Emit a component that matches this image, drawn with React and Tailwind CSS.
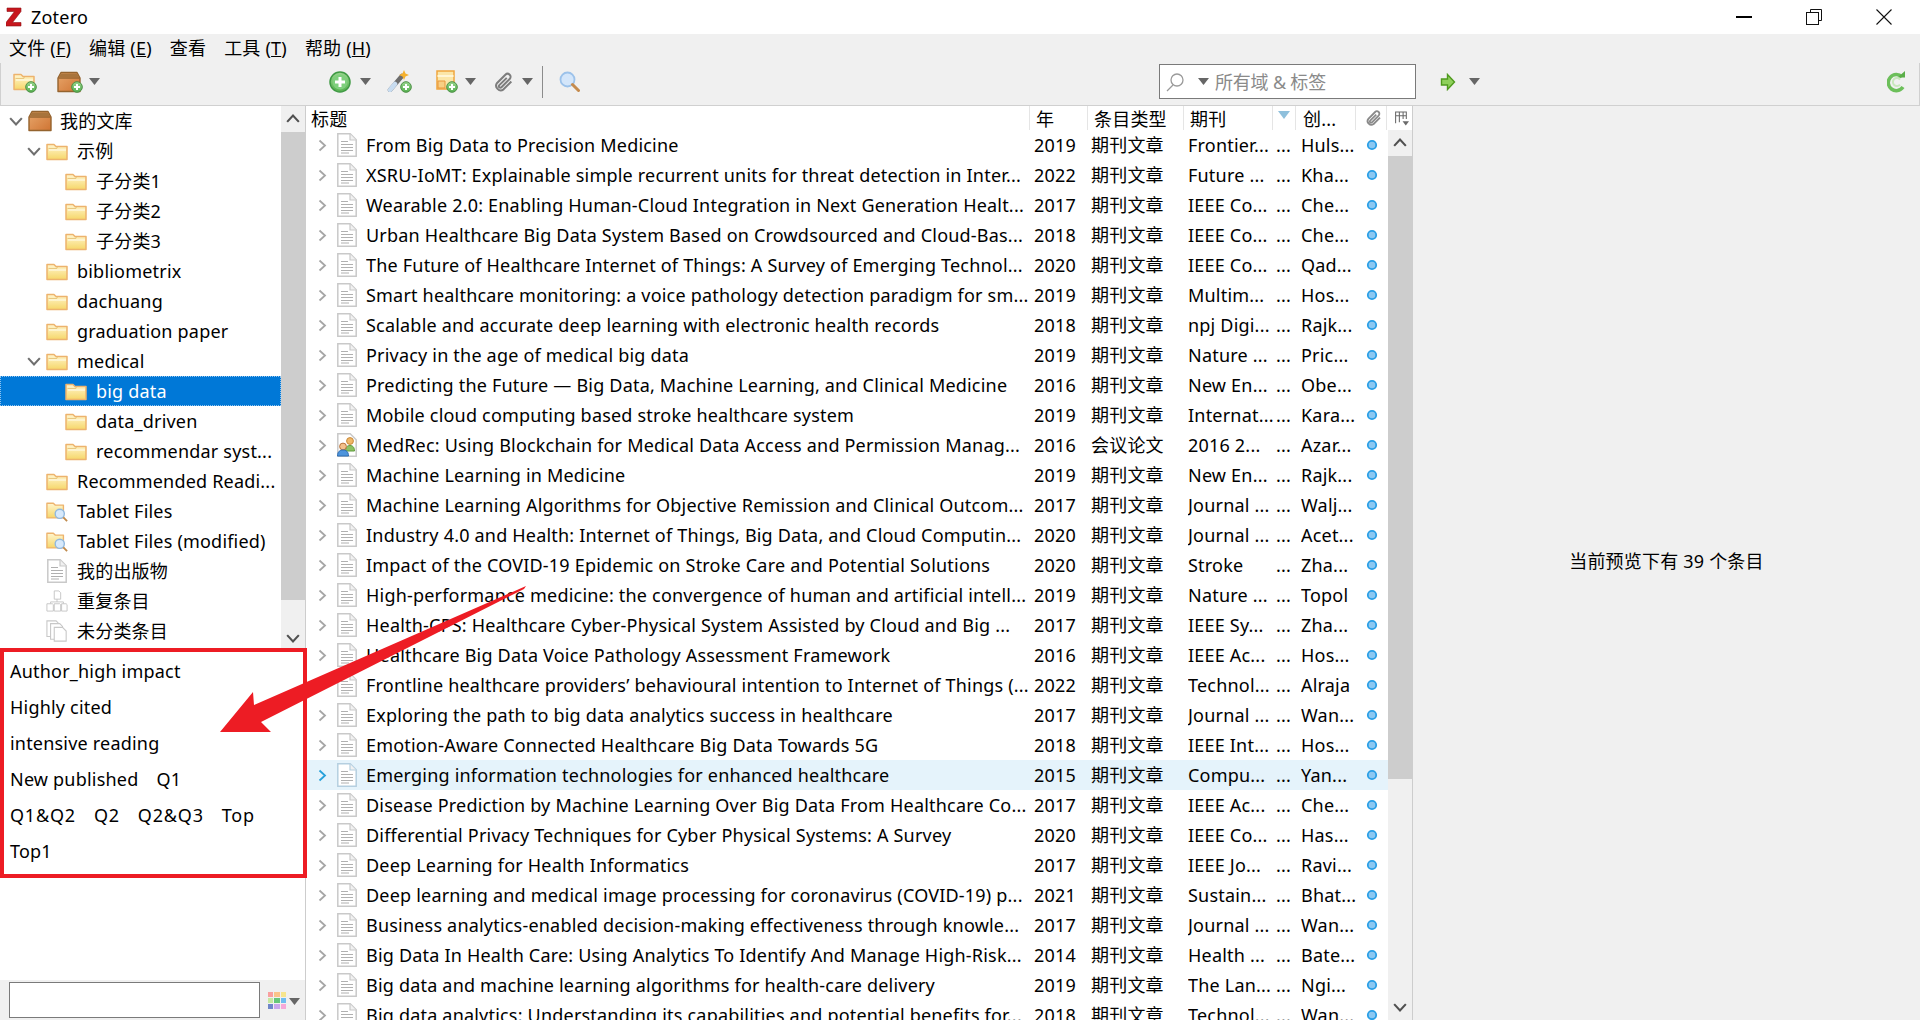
const items = [
  ["From Big Data to Precision Medicine", "2019", "期刊文章", "Frontier...", "Huls..."],
  ["XSRU-IoMT: Explainable simple recurrent units for threat detection in Inter...", "2022", "期刊文章", "Future ...", "Kha..."],
  ["Wearable 2.0: Enabling Human-Cloud Integration in Next Generation Healt...", "2017", "期刊文章", "IEEE Co...", "Che..."],
  ["Urban Healthcare Big Data System Based on Crowdsourced and Cloud-Bas...", "2018", "期刊文章", "IEEE Co...", "Che..."],
  ["The Future of Healthcare Internet of Things: A Survey of Emerging Technol...", "2020", "期刊文章", "IEEE Co...", "Qad..."],
  ["Smart healthcare monitoring: a voice pathology detection paradigm for sm...", "2019", "期刊文章", "Multim...", "Hos..."],
  ["Scalable and accurate deep learning with electronic health records", "2018", "期刊文章", "npj Digi...", "Rajk..."],
  ["Privacy in the age of medical big data", "2019", "期刊文章", "Nature ...", "Pric..."],
  ["Predicting the Future — Big Data, Machine Learning, and Clinical Medicine", "2016", "期刊文章", "New En...", "Obe..."],
  ["Mobile cloud computing based stroke healthcare system", "2019", "期刊文章", "Internat...", "Kara..."],
  ["MedRec: Using Blockchain for Medical Data Access and Permission Manag...", "2016", "会议论文", "2016 2...", "Azar..."],
  ["Machine Learning in Medicine", "2019", "期刊文章", "New En...", "Rajk..."],
  ["Machine Learning Algorithms for Objective Remission and Clinical Outcom...", "2017", "期刊文章", "Journal ...", "Walj..."],
  ["Industry 4.0 and Health: Internet of Things, Big Data, and Cloud Computin...", "2020", "期刊文章", "Journal ...", "Acet..."],
  ["Impact of the COVID-19 Epidemic on Stroke Care and Potential Solutions", "2020", "期刊文章", "Stroke", "Zha..."],
  ["High-performance medicine: the convergence of human and artificial intell...", "2019", "期刊文章", "Nature ...", "Topol"],
  ["Health-CPS: Healthcare Cyber-Physical System Assisted by Cloud and Big ...", "2017", "期刊文章", "IEEE Sy...", "Zha..."],
  ["Healthcare Big Data Voice Pathology Assessment Framework", "2016", "期刊文章", "IEEE Ac...", "Hos..."],
  ["Frontline healthcare providers’ behavioural intention to Internet of Things (...", "2022", "期刊文章", "Technol...", "Alraja"],
  ["Exploring the path to big data analytics success in healthcare", "2017", "期刊文章", "Journal ...", "Wan..."],
  ["Emotion-Aware Connected Healthcare Big Data Towards 5G", "2018", "期刊文章", "IEEE Int...", "Hos..."],
  ["Emerging information technologies for enhanced healthcare", "2015", "期刊文章", "Compu...", "Yan..."],
  ["Disease Prediction by Machine Learning Over Big Data From Healthcare Co...", "2017", "期刊文章", "IEEE Ac...", "Che..."],
  ["Differential Privacy Techniques for Cyber Physical Systems: A Survey", "2020", "期刊文章", "IEEE Co...", "Has..."],
  ["Deep Learning for Health Informatics", "2017", "期刊文章", "IEEE Jo...", "Ravi..."],
  ["Deep learning and medical image processing for coronavirus (COVID-19) p...", "2021", "期刊文章", "Sustain...", "Bhat..."],
  ["Business analytics-enabled decision-making effectiveness through knowle...", "2017", "期刊文章", "Journal ...", "Wan..."],
  ["Big Data In Health Care: Using Analytics To Identify And Manage High-Risk...", "2014", "期刊文章", "Health ...", "Bate..."],
  ["Big data and machine learning algorithms for health-care delivery", "2019", "期刊文章", "The Lan...", "Ngi..."],
  ["Big data analytics: Understanding its capabilities and potential benefits for...", "2018", "期刊文章", "Technol...", "Wan..."],
];

const tree = [
  { label: "我的文库", level: 0, icon: "library", open: true },
  { label: "示例", level: 1, icon: "folder", open: true },
  { label: "子分类1", level: 2, icon: "folder" },
  { label: "子分类2", level: 2, icon: "folder" },
  { label: "子分类3", level: 2, icon: "folder" },
  { label: "bibliometrix", level: 1, icon: "folder" },
  { label: "dachuang", level: 1, icon: "folder" },
  { label: "graduation paper", level: 1, icon: "folder" },
  { label: "medical", level: 1, icon: "folder", open: true },
  { label: "big data", level: 2, icon: "folder", selected: true },
  { label: "data_driven", level: 2, icon: "folder" },
  { label: "recommendar syst...", level: 2, icon: "folder" },
  { label: "Recommended Readi...", level: 1, icon: "folder" },
  { label: "Tablet Files", level: 1, icon: "search" },
  { label: "Tablet Files (modified)", level: 1, icon: "search" },
  { label: "我的出版物", level: 1, icon: "doc" },
  { label: "重复条目", level: 1, icon: "dupes" },
  { label: "未分类条目", level: 1, icon: "unfiled" },
];

const tagRows = [
  ["Author_high impact"],
  ["Highly cited"],
  ["intensive reading"],
  ["New published", "Q1"],
  ["Q1&Q2", "Q2", "Q2&Q3", "Top"],
  ["Top1"],
];

const swatches = ["#f9a0a0", "#fbc48a", "#f6e58d", "#c5e8a0", "#66c77a", "#6fbdf0", "#6f86c9", "#c9a6ec", "#f5a8d8"];

const Defs = () => (
  <svg className="absolute w-0 h-0">
    <defs>
      <linearGradient id="folderFill" x1="0" y1="0" x2="0" y2="1">
        <stop offset="0" stopColor="#fff6d0" />
        <stop offset="1" stopColor="#f6d76a" />
      </linearGradient>
      <linearGradient id="boxFill" x1="0" y1="0" x2="1" y2="1">
        <stop offset="0" stopColor="#e8a76c" />
        <stop offset="1" stopColor="#cf7433" />
      </linearGradient>
      <linearGradient id="greenFill" x1="0" y1="0" x2="0" y2="1">
        <stop offset="0" stopColor="#9ad68f" />
        <stop offset="1" stopColor="#55b04f" />
      </linearGradient>
    </defs>
  </svg>
);

const Chevron = ({ dir = "right", color = "#a0a0a0", size = 12 }) => {
  const d = {
    right: "M3.500 1 9 6l-5.500 5",
    down: "M1 3.500 6 9l5-5.500",
    up: "M1 8.500 6 3l5 5.500",
  }[dir];
  return (
    <svg width={size} height={size} viewBox="0 0 12 12" fill="none" stroke={color} strokeWidth="1.800">
      <path d={d} />
    </svg>
  );
};

const Caret = ({ className = "" }) => (
  <svg width="11" height="7" viewBox="0 0 11 7" className={className}>
    <path d="M0 0h11L5.500 7z" fill="#666" />
  </svg>
);

const Folder = () => (
  <svg width="22" height="20" viewBox="0 0 22 20">
    <path d="M1 3.500h7l2 2h11v13H1z" fill="url(#folderFill)" stroke="#edb36d" strokeWidth="1.500" strokeLinejoin="round" />
    <path d="M2.500 7.500h8l1-1.500" fill="none" stroke="#e9c77f" strokeWidth="1.200" />
    <path d="M3 9h17" stroke="#fffbe6" strokeWidth="1.200" />
  </svg>
);

const Library = () => (
  <svg width="24" height="22" viewBox="0 0 24 22">
    <path d="M1 7 4 1.500h16L23 7v13.500H1z" fill="url(#boxFill)" stroke="#94632e" strokeWidth="1.400" strokeLinejoin="round" />
    <path d="M1.500 7h21" stroke="#94632e" strokeWidth="1.400" />
    <path d="M4 2.500h16L22 6H2z" fill="#a8743c" />
  </svg>
);

const Doc = ({ tint = "#c9c9c9" }) => (
  <svg width="20" height="24" viewBox="0 0 20 24">
    <path d="M.8.8h12.400l6 6v16.400H.8z" fill="#fff" stroke={tint} strokeWidth="1.500" />
    <path d="M13 1v6h6" fill="#f1f1f1" stroke={tint} strokeWidth="1.200" />
    <path d="M4 8.500h7M4 11.500h12M4 14.500h12M4 17.500h12M4 20h8" stroke="#b0b0b0" strokeWidth="1" />
  </svg>
);

const ConferenceDoc = () => (
  <svg width="20" height="24" viewBox="0 0 20 24">
    <path d="M.8.8h12.400l6 6v16.400H.8z" fill="#fff" stroke="#c9c9c9" strokeWidth="1.500" />
    <circle cx="13" cy="8" r="3.400" fill="#f0b868" stroke="#c98a3c" />
    <path d="M8.500 18c0-4 2-5.500 4.500-5.500s4.500 1.500 4.500 5.500z" fill="#8cc263" stroke="#5f9a3c" />
    <circle cx="6" cy="13.500" r="3.400" fill="#f3c08b" stroke="#b8733a" />
    <path d="M.5 23c0-4.500 2.500-6 5.500-6s5.500 1.500 5.500 6z" fill="#4d94dc" stroke="#2f6eb3" />
  </svg>
);

const SavedSearch = () => (
  <svg width="24" height="25" viewBox="0 0 24 25">
    <path d="M1 3.500h7l2 2h9v14H1z" fill="url(#folderFill)" stroke="#edb36d" strokeWidth="1.500" strokeLinejoin="round" />
    <circle cx="15" cy="15" r="5" fill="#d7e9fb" stroke="#8fb8e0" strokeWidth="1.500" />
    <path d="m19 19 4 4" stroke="#c08a4c" strokeWidth="2" />
  </svg>
);

const Dupes = () => (
  <svg width="24" height="24" viewBox="0 0 24 24" fill="#fff" stroke="#c4c4c4" strokeWidth="1">
    <path d="M9 1h5l2 2v7H9z" />
    <path d="M12 10v3M5 15v-2h14v2" fill="none" />
    <path d="M1 15h6l1 1v7H1zM9 15h6l1 1v7H9zM17 15h5l1 1v7h-6z" />
  </svg>
);

const Unfiled = () => (
  <svg width="24" height="24" viewBox="0 0 24 24" fill="#fff" stroke="#c8c8c8" strokeWidth="1.200">
    <path d="M1 1h10l3 3v14H1z" />
    <path d="M5 4h10l3 3v14H5z" />
    <path d="M9 8h9l4 4v11H9z" />
  </svg>
);

const PlusBadge = ({ className = "" }) => (
  <svg width="12" height="12" viewBox="0 0 12 12" className={"absolute " + className}>
    <circle cx="6" cy="6" r="5.300" fill="url(#greenFill)" stroke="#4d8f46" />
    <path d="M6 3v6M3 6h6" stroke="#fff" strokeWidth="2" />
  </svg>
);

const treeIcons = {
  folder: <Folder />,
  library: <Library />,
  search: <SavedSearch />,
  doc: <Doc />,
  dupes: <Dupes />,
  unfiled: <Unfiled />,
};

const TreeRow = ({ row }) => {
  const pad = { 0: "pl-[9px]", 1: "pl-[27px]", 2: "pl-[46px]" }[row.level];
  const iconBox = row.level === 0 ? "w-[24px]" : "w-[22px]";
  return (
    <div
      className={
        "flex items-center h-[30px] whitespace-nowrap " +
        pad +
        (row.selected ? " bg-[#0078d7] text-white outline-1 outline-dotted outline-[#8fc3ef] -outline-offset-1" : "")
      }
    >
      <span className="flex items-center justify-center w-[14px] h-[14px]">
        {row.open && <Chevron dir="down" color="#6f6f6f" size={14} />}
      </span>
      <span className={"flex items-center justify-center ml-[5px] " + iconBox}>{treeIcons[row.icon]}</span>
      <span className={row.level === 0 ? "ml-[8px]" : "ml-[9px]"}>{row.label}</span>
    </div>
  );
};

const Scrollbar = ({ children }) => (
  <div className="flex flex-col w-[24px] shrink-0 bg-[#f0f0f0]">{children}</div>
);

const LeftPane = () => (
  <div className="flex flex-col w-[306px] shrink-0 border-r border-[#cdcdcd]">
    <div className="flex h-[542px]">
      <div className="w-[281px] shrink-0 overflow-hidden">
        {tree.map((row) => (
          <TreeRow key={row.label} row={row} />
        ))}
      </div>
      <Scrollbar>
        <div className="flex items-center justify-center h-[26px]">
          <Chevron dir="up" color="#505050" size={14} />
        </div>
        <div className="h-[468px] bg-[#cdcdcd]" />
        <div className="flex-1 flex items-end justify-center pb-[3px]">
          <Chevron dir="down" color="#505050" size={14} />
        </div>
      </Scrollbar>
    </div>
    <div className="h-[230px] w-[307px] border-4 border-[#ed1c24] pl-[6px] pt-px relative z-10">
      {tagRows.map((row, i) => (
        <div key={i} className={"flex items-center gap-[18px] h-[36px] " + (i === 4 ? "tracking-[0.8px]" : "")}>
          {row.map((t) => (
            <span key={t}>{t}</span>
          ))}
        </div>
      ))}
    </div>
    <div className="flex-1" />
    <div className="flex items-center h-[40px] bg-[#f0f0f0] pl-[9px]">
      <div className="w-[251px] h-[36px] bg-white border border-[#7a7a7a]" />
      <div className="grid grid-cols-3 gap-[1px] w-[18px] ml-[8px]">
        {swatches.map((c) => (
          <span key={c} className="h-[5px]" style={{ backgroundColor: c }} />
        ))}
      </div>
      <Caret className="ml-[3px] mt-[3px]" />
    </div>
  </div>
);

const HeaderCell = ({ className, children }) => (
  <div className={"flex items-center shrink-0 h-full border-r border-[#e5e5e5] overflow-hidden whitespace-nowrap " + className}>
    {children}
  </div>
);

const ItemRow = ({ item, index }) => {
  const selected = index === 21;
  const attached = index === 10;
  return (
    <div className={"flex items-center h-[30px] whitespace-nowrap " + (selected ? "bg-[#e5f3fb]" : "")}>
      <span className="flex justify-center w-[12px] ml-[10px]">
        <Chevron color={selected ? "#26a0da" : "#a6a6a6"} size={15} />
      </span>
      <span className="flex w-[20px] ml-[9px]">{attached ? <ConferenceDoc /> : <Doc tint={selected ? "#b5cfe0" : "#c9c9c9"} />}</span>
      <span className="w-[668px] ml-[9px] overflow-hidden">{item[0]}</span>
      <span className="w-[57px]">{item[1]}</span>
      <span className="w-[97px]">{item[2]}</span>
      <span className="w-[88px] overflow-hidden">{item[3]}</span>
      <span className="w-[25px]">...</span>
      <span className="w-[64px] overflow-hidden">{item[4]}</span>
      <svg width="12" height="12" viewBox="0 0 12 12" className="ml-[1px]">
        <circle cx="6" cy="6" r="4.200" fill="#8cc8f2" stroke="#2a9fe6" strokeWidth="1.800" />
      </svg>
    </div>
  );
};

const MiddlePane = () => (
  <div className="flex flex-col w-[1106px] shrink-0 overflow-hidden">
    <div className="flex items-center h-[24px] shrink-0">
      <HeaderCell className="w-[724px] pl-[5px] pt-[2px]">标题</HeaderCell>
      <HeaderCell className="w-[58px] pl-[6px] pt-[2px]">年</HeaderCell>
      <HeaderCell className="w-[96px] pl-[6px] pt-[2px]">条目类型</HeaderCell>
      <HeaderCell className="w-[89px] pl-[6px] pt-[2px]">期刊</HeaderCell>
      <HeaderCell className="w-[23px] justify-center">
        <svg width="12" height="8" viewBox="0 0 12 8" className="mb-[6px]">
          <path d="M0 0h12L6 8z" fill="#8fc0dc" />
        </svg>
      </HeaderCell>
      <HeaderCell className="w-[60px] pl-[7px] pt-[2px]">创...</HeaderCell>
      <HeaderCell className="w-[31px] justify-center pl-[6px]">
        <svg width="18" height="22" viewBox="0 0 24 24" fill="none" stroke="#8a8a8a" strokeWidth="2.400">
          <path d="M20 11.500 11.500 20a5 5 0 0 1-7-7l9-9a3.300 3.300 0 0 1 4.700 4.700l-9 9a1.600 1.600 0 0 1-2.300-2.300L15 7.500" />
        </svg>
      </HeaderCell>
      <div className="flex justify-center w-[25px] shrink-0 pl-[3px]">
        <svg width="15" height="17" viewBox="0 0 14 15" fill="none" stroke="#6a6a6a">
          <path d="M1.500 12V1.500h10V8M1.500 5h10M5 1.500V11M8.500 1.500V8" />
          <path d="M8 10h6l-3 4z" fill="#6a6a6a" stroke="none" />
        </svg>
      </div>
    </div>
    <div className="flex flex-1 min-h-0">
      <div className="w-[1082px] shrink-0 overflow-hidden">
        {items.map((item, i) => (
          <ItemRow key={item[0]} item={item} index={i} />
        ))}
      </div>
      <Scrollbar>
        <div className="flex items-center justify-center h-[26px]">
          <Chevron dir="up" color="#505050" size={14} />
        </div>
        <div className="h-[623px] bg-[#cdcdcd]" />
        <div className="flex-1 flex items-end justify-center pb-[6px]">
          <Chevron dir="down" color="#505050" size={14} />
        </div>
      </Scrollbar>
    </div>
  </div>
);

const Toolbar = () => (
  <div className="flex items-center h-[43px] pb-[5px] shrink-0 bg-[#f0f0f0] border-b border-l border-r border-[#d0d0d0]">
    <span className="relative w-[24px] h-[22px] ml-[12px]">
      <Folder />
      <PlusBadge className="right-0 bottom-0" />
    </span>
    <span className="relative w-[26px] h-[22px] ml-[20px]">
      <Library />
      <PlusBadge className="right-0 bottom-0" />
    </span>
    <Caret className="ml-[6px]" />
    <svg width="22" height="22" viewBox="0 0 22 22" className="ml-[229px]">
      <circle cx="11" cy="11" r="10" fill="url(#greenFill)" stroke="#3f9a44" strokeWidth="1.500" />
      <circle cx="11" cy="11" r="7.500" fill="#7fcf7d" />
      <path d="M11 6v10M6 11h10" stroke="#fff" strokeWidth="3" />
    </svg>
    <Caret className="ml-[9px]" />
    <span className="relative w-[25px] h-[23px] ml-[16px]">
      <svg width="22" height="22" viewBox="0 0 22 22">
        <path d="M3 20 15 6" stroke="#6d6d6d" strokeWidth="4.500" strokeLinecap="round" />
        <path d="M3 20 8 14" stroke="#c8dcf0" strokeWidth="4.500" strokeLinecap="round" />
        <path d="m17 0 1.500 3.500L22 5l-3.500 1.500L17 10l-1.500-3.500L12 5l3.500-1.500z" fill="#f5b12e" />
      </svg>
      <PlusBadge className="right-0 bottom-0" />
    </span>
    <span className="relative w-[22px] h-[23px] ml-[24px]">
      <svg width="19" height="20" viewBox="0 0 19 20">
        <rect x="1" y="1" width="17" height="18" fill="#fbe6a8" stroke="#f0a53c" strokeWidth="1.500" />
        <path d="M1.500 6h16" stroke="#fff6d6" strokeWidth="2" />
        <path d="M2 11h7v7H2z" fill="#f8cf83" stroke="#e8963c" />
      </svg>
      <PlusBadge className="right-0 bottom-0" />
    </span>
    <Caret className="ml-[7px]" />
    <svg width="22" height="26" viewBox="0 0 24 24" fill="none" stroke="#7d7d7d" strokeWidth="2.200" className="ml-[17px]">
      <path d="M20 11.500 11.500 20a5 5 0 0 1-7-7l9-9a3.300 3.300 0 0 1 4.700 4.700l-9 9a1.600 1.600 0 0 1-2.300-2.300L15 7.500" />
    </svg>
    <Caret className="ml-[7px]" />
    <span className="w-px h-[32px] bg-[#8c8c8c] ml-[9px]" />
    <svg width="21" height="21" viewBox="0 0 21 21" className="ml-[16px]">
      <circle cx="8.500" cy="8.500" r="7" fill="#d4e6fa" stroke="#9cc2ea" strokeWidth="1.800" />
      <path d="m13.500 13.500 6 6" stroke="#c58b4e" strokeWidth="3" strokeLinecap="round" />
    </svg>
    <div className="flex items-center w-[257px] h-[35px] ml-[579px] bg-white border border-[#7a7a7a] text-[#8a8a8a]">
      <svg width="20" height="20" viewBox="0 0 20 20" fill="none" stroke="#9a9a9a" strokeWidth="1.300" className="ml-[5px]">
        <circle cx="12" cy="8" r="6" />
        <path d="m8 13-6 6" />
      </svg>
      <Caret className="ml-[13px]" />
      <span className="ml-[6px] whitespace-nowrap tracking-[-0.2px]">所有域 &amp; 标签</span>
    </div>
    <svg width="16" height="18" viewBox="0 0 16 18" className="ml-[24px]">
      <path d="M1.500 6h6V1.500L14.500 9l-7 7.500V12h-6z" fill="#8fd05c" stroke="#4f9a1e" strokeWidth="1.400" />
    </svg>
    <Caret className="ml-[13px]" />
    <svg width="20" height="24" viewBox="0 0 20 24" fill="none" className="ml-[407px]">
      <path d="M15 7A8 8 0 1 0 16 17" stroke="#6cbf5a" strokeWidth="3.500" />
      <path d="M10.500 7.500H18V1z" fill="#5aae48" />
      <path d="M13 9.500A4 4 0 1 0 13 14.500" stroke="#c9e8bd" strokeWidth="2" />
    </svg>
  </div>
);

const Arrow = () => (
  <svg width="1920" height="1020" viewBox="0 0 1920 1020" className="absolute left-0 top-0 z-20 pointer-events-none">
    <path d="M526 586 254 705l-1-13-33 40h51l-10-10 263-133z" fill="#ed1c24" />
  </svg>
);

export default function App() {
  return (
    <div className="relative flex flex-col h-[1020px] w-[1920px] overflow-hidden bg-white text-black text-[18px] leading-[24px] tracking-[0.2px] font-['Noto_Sans','Noto_Sans_CJK_SC',sans-serif]">
      <Defs />
      <div className="flex items-center h-[34px] shrink-0 pl-[6px]">
        <svg width="16" height="20" viewBox="0 0 16 20">
          <path d="M1 1h14v3.500L6.500 15.500H15V19H0v-3.500L8.500 4.500H1z" fill="#c8161d" stroke="#8e1015" strokeWidth=".6" />
        </svg>
        <span className="ml-[9px]">Zotero</span>
        <div className="flex items-center ml-auto">
          <span className="w-[16px] h-[1.500px] bg-black mr-[54px]" />
          <svg width="16" height="16" viewBox="0 0 16 16" fill="none" stroke="#111" className="mr-[54px]">
            <path d="M4.500 3V.5h11v11H13" />
            <rect x=".5" y="3.500" width="12" height="12" />
          </svg>
          <svg width="16" height="16" viewBox="0 0 16 16" stroke="#111" strokeWidth="1.100" className="mr-[28px]">
            <path d="m.5.500 15 15M15.500.500l-15 15" />
          </svg>
        </div>
      </div>
      <div className="flex items-center h-[29px] pb-[2px] shrink-0 bg-[#f0f0f0] whitespace-nowrap">
        <span className="ml-[9px]">文件 (<u>F</u>)</span>
        <span className="ml-[18px]">编辑 (<u>E</u>)</span>
        <span className="ml-[18px]">查看</span>
        <span className="ml-[18px]">工具 (<u>T</u>)</span>
        <span className="ml-[18px]">帮助 (<u>H</u>)</span>
      </div>
      <Toolbar />
      <div className="flex flex-1 min-h-0">
        <LeftPane />
        <MiddlePane />
        <div className="flex items-center justify-center flex-1 bg-[#f0f0f0] border-l border-[#cdcdcd] pb-[4px]">
          当前预览下有 39 个条目
        </div>
      </div>
      <Arrow />
    </div>
  );
}
